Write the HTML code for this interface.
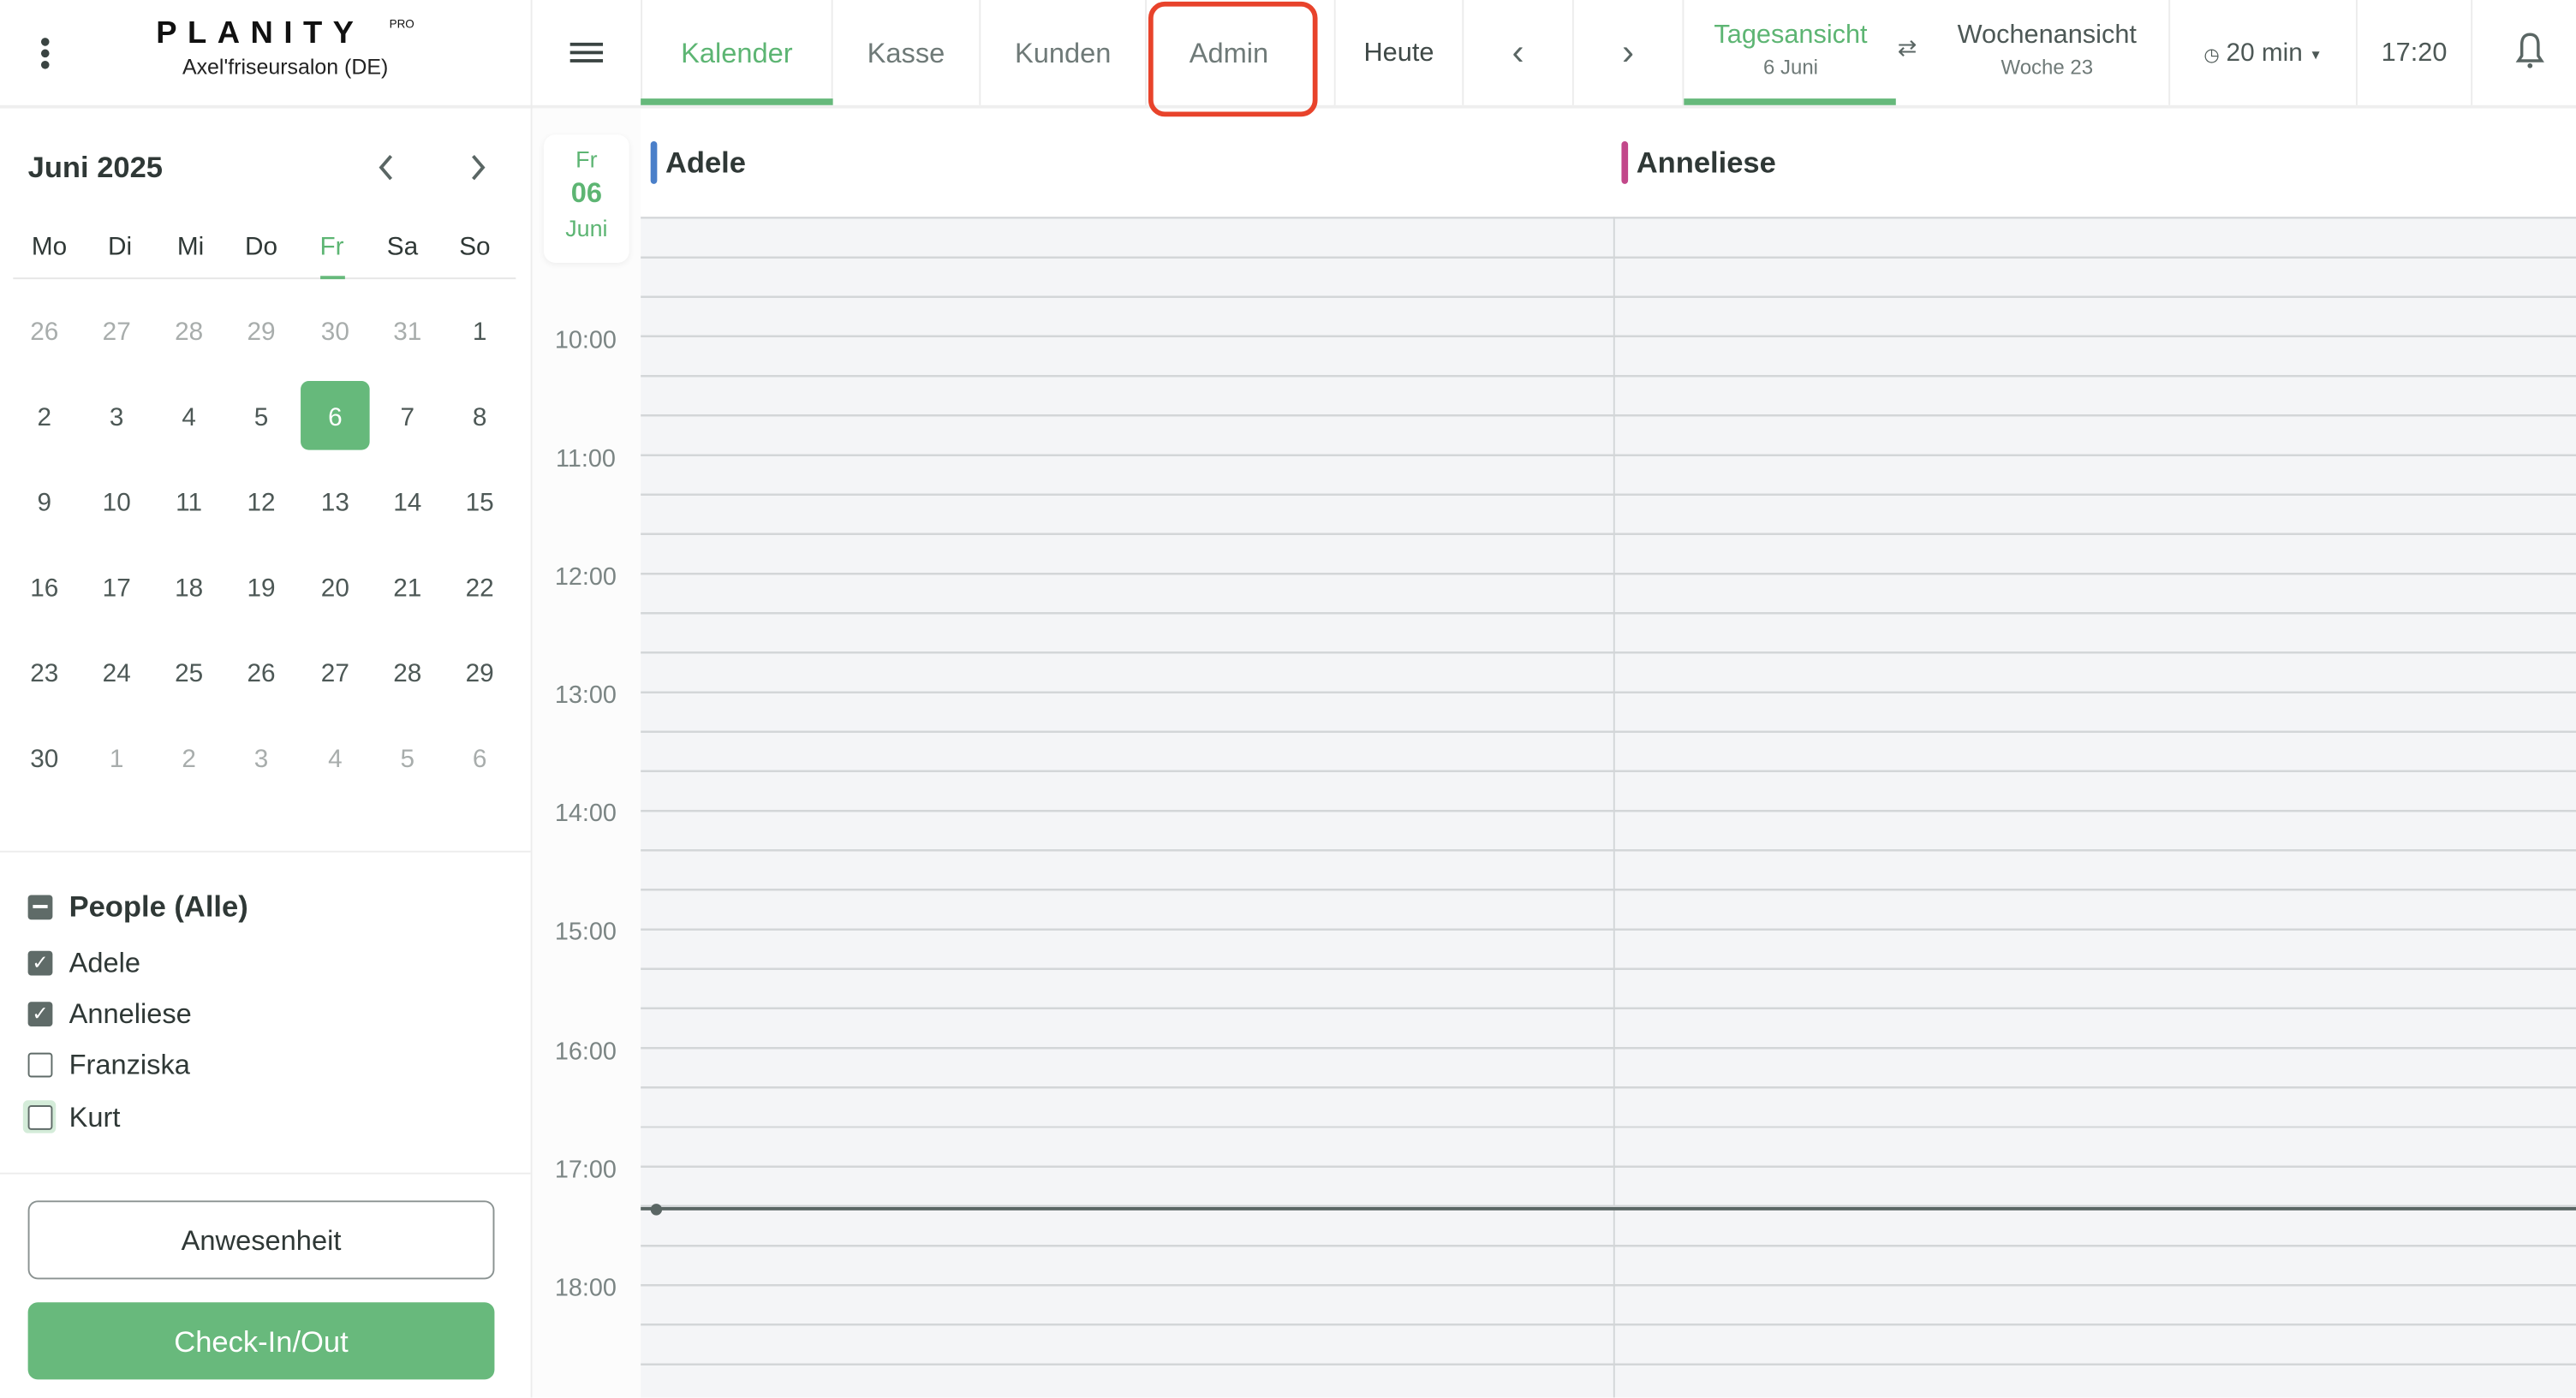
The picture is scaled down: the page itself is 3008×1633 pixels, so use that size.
<!DOCTYPE html>
<html><head><meta charset="utf-8">
<style>
html,body{margin:0;padding:0;width:3008px;height:1632px;overflow:hidden;background:#fff}
#s{position:absolute;left:0;top:0;width:1568px;height:851px;transform:scale(1.918367);transform-origin:0 0;font-family:"Liberation Sans",sans-serif;color:#374140;overflow:hidden}
.a{position:absolute}
.tab{position:absolute;top:0;height:64px;display:flex;align-items:center;justify-content:center;font-size:17px;color:#6f7a78;border-right:1px solid #ececec;box-sizing:border-box}
.c{position:absolute;width:30px;text-align:center;font-size:15.5px;color:#4d5856;margin-left:-15px}
.g{color:#a8adac}
.t{position:absolute;left:323px;width:67px;text-align:center;font-size:15px;color:#7b8584}
.cb{position:absolute;left:17px;width:15px;height:15px;border-radius:2px;box-sizing:border-box}
.pl{position:absolute;left:42px;font-size:17px;color:#2f3836}
</style></head><body><div id="s">
<!-- header -->
<div class="a" style="left:0;top:64px;width:1568px;height:2px;background:#efefef"></div>
<div class="a" style="left:25px;top:23px;width:5px;height:5px;border-radius:3px;background:#3a4442"></div>
<div class="a" style="left:25px;top:30px;width:5px;height:5px;border-radius:3px;background:#3a4442"></div>
<div class="a" style="left:25px;top:37px;width:5px;height:5px;border-radius:3px;background:#3a4442"></div>
<div class="a" style="left:95px;top:10px;font-size:19px;font-weight:bold;letter-spacing:6.5px;color:#111">PLANITY</div>
<div class="a" style="left:237px;top:12px;font-size:7px;color:#111">PRO</div>
<div class="a" style="left:111px;top:33px;font-size:13px;color:#222">Axel'friseursalon (DE)</div>
<div class="a" style="left:323px;top:0;width:1px;height:851px;background:#ececec"></div>
<div class="a" style="left:347px;top:26px;width:20px;height:2px;background:#3a4442;box-shadow:0 5px 0 #3a4442,0 10px 0 #3a4442"></div>
<div class="tab" style="left:390px;width:117px;color:#5db573;border-left:1px solid #ececec;padding-top:2px">Kalender</div>
<div class="a" style="left:390px;top:60px;width:117px;height:4px;background:#66b97b"></div>
<div class="tab" style="left:507px;width:90px;padding-top:2px">Kasse</div>
<div class="tab" style="left:597px;width:101px;padding-top:2px">Kunden</div>
<div class="tab" style="left:698px;width:115px;padding-top:2px;padding-right:14px">Admin</div>
<div class="a" style="left:699px;top:1px;width:97px;height:64px;border:3px solid #e8432b;border-radius:10px"></div>
<div class="tab" style="left:813px;width:78px;font-size:16px;color:#3f4947;padding-top:2px">Heute</div>
<div class="tab" style="left:891px;width:67px;font-size:22px;color:#5a6664">&#x2039;</div>
<div class="tab" style="left:958px;width:67px;font-size:22px;color:#5a6664">&#x203A;</div>
<div class="a" style="left:1025px;top:0;width:130px;height:64px;text-align:center">
 <div style="margin-top:13px;font-size:16px;color:#5db573">Tagesansicht</div>
 <div style="font-size:12.5px;color:#6f7a78;margin-top:3px">6 Juni</div></div>
<div class="a" style="left:1025px;top:60px;width:129px;height:4px;background:#66b97b"></div>
<div class="a" style="left:1155px;top:21px;font-size:14px;color:#5a6664">&#x21C4;</div>
<div class="a" style="left:1176px;top:0;width:140px;height:64px;text-align:center">
 <div style="margin-top:13px;font-size:16px;color:#4d5856">Wochenansicht</div>
 <div style="font-size:12.5px;color:#6f7a78;margin-top:3px">Woche 23</div></div>
<div class="tab" style="left:1320px;width:115px;font-size:15.5px;color:#4d5856;border-left:1px solid #ececec;padding-top:2px"><span style="font-size:11px;margin-right:4px">&#x25F7;</span>20 min <span style="font-size:8px;margin-left:4px">&#x25BC;</span></div>
<div class="tab" style="left:1435px;width:70px;font-size:16px;color:#4d5856;padding-top:2px">17:20</div>
<svg class="a" style="left:1530px;top:19px" width="20" height="24" viewBox="0 0 20 24"><path d="M10 2 C6 2 5 5 5 8 L5 15 L3 18 L17 18 L15 15 L15 8 C15 5 14 2 10 2Z" fill="none" stroke="#5a6664" stroke-width="1.8"/><circle cx="10" cy="21" r="1.5" fill="#5a6664"/></svg>
<!-- sidebar calendar -->
<div class="a" style="left:17px;top:92px;font-size:18px;font-weight:bold;color:#2f3836">Juni 2025</div>
<svg class="a" style="left:229px;top:93px" width="12" height="18" viewBox="0 0 12 18"><path d="M9 2 L3 9 L9 16" fill="none" stroke="#5a6664" stroke-width="2"/></svg>
<svg class="a" style="left:285px;top:93px" width="12" height="18" viewBox="0 0 12 18"><path d="M3 2 L9 9 L3 16" fill="none" stroke="#5a6664" stroke-width="2"/></svg>
<div class="c" style="left:30px;top:142px;color:#2f3836">Mo</div>
<div class="c" style="left:73px;top:142px;color:#2f3836">Di</div>
<div class="c" style="left:116px;top:142px;color:#2f3836">Mi</div>
<div class="c" style="left:159px;top:142px;color:#2f3836">Do</div>
<div class="c" style="left:202px;top:142px;color:#5db573">Fr</div>
<div class="c" style="left:245px;top:142px;color:#2f3836">Sa</div>
<div class="c" style="left:289px;top:142px;color:#2f3836">So</div>
<div class="a" style="left:8px;top:169px;width:306px;height:1px;background:#e6e6e6"></div>
<div class="a" style="left:195px;top:168px;width:15px;height:2px;background:#66b97b"></div>
<div class="a" style="left:183px;top:232px;width:42px;height:42px;border-radius:5px;background:#66b97b"></div>
<div class="c g" style="left:27px;top:194px">26</div><div class="c g" style="left:71px;top:194px">27</div><div class="c g" style="left:115px;top:194px">28</div><div class="c g" style="left:159px;top:194px">29</div><div class="c g" style="left:204px;top:194px">30</div><div class="c g" style="left:248px;top:194px">31</div><div class="c" style="left:292px;top:194px">1</div>
<div class="c" style="left:27px;top:246px">2</div><div class="c" style="left:71px;top:246px">3</div><div class="c" style="left:115px;top:246px">4</div><div class="c" style="left:159px;top:246px">5</div><div class="c" style="left:204px;top:246px;color:#fff">6</div><div class="c" style="left:248px;top:246px">7</div><div class="c" style="left:292px;top:246px">8</div>
<div class="c" style="left:27px;top:298px">9</div><div class="c" style="left:71px;top:298px">10</div><div class="c" style="left:115px;top:298px">11</div><div class="c" style="left:159px;top:298px">12</div><div class="c" style="left:204px;top:298px">13</div><div class="c" style="left:248px;top:298px">14</div><div class="c" style="left:292px;top:298px">15</div>
<div class="c" style="left:27px;top:350px">16</div><div class="c" style="left:71px;top:350px">17</div><div class="c" style="left:115px;top:350px">18</div><div class="c" style="left:159px;top:350px">19</div><div class="c" style="left:204px;top:350px">20</div><div class="c" style="left:248px;top:350px">21</div><div class="c" style="left:292px;top:350px">22</div>
<div class="c" style="left:27px;top:402px">23</div><div class="c" style="left:71px;top:402px">24</div><div class="c" style="left:115px;top:402px">25</div><div class="c" style="left:159px;top:402px">26</div><div class="c" style="left:204px;top:402px">27</div><div class="c" style="left:248px;top:402px">28</div><div class="c" style="left:292px;top:402px">29</div>
<div class="c" style="left:27px;top:454px">30</div><div class="c g" style="left:71px;top:454px">1</div><div class="c g" style="left:115px;top:454px">2</div><div class="c g" style="left:159px;top:454px">3</div><div class="c g" style="left:204px;top:454px">4</div><div class="c g" style="left:248px;top:454px">5</div><div class="c g" style="left:292px;top:454px">6</div>
<div class="a" style="left:0;top:518px;width:323px;height:1px;background:#ececec"></div>
<!-- people -->
<div class="cb" style="top:545px;background:#5f6b68"><div style="margin:6px 3px;height:2px;background:#fff"></div></div>
<div class="a" style="left:42px;top:542px;font-size:18px;font-weight:bold;color:#2f3836">People (Alle)</div>
<div class="cb" style="top:579px;background:#5f6b68;color:#fff;font-size:12px;text-align:center;line-height:15px">&#x2713;</div>
<div class="pl" style="top:577px">Adele</div>
<div class="cb" style="top:610px;background:#5f6b68;color:#fff;font-size:12px;text-align:center;line-height:15px">&#x2713;</div>
<div class="pl" style="top:608px">Anneliese</div>
<div class="cb" style="top:641px;border:1.5px solid #5f6b68"></div>
<div class="pl" style="top:639px">Franziska</div>
<div class="a" style="left:14px;top:670px;width:20px;height:20px;border-radius:3px;background:#d4ecd9"></div>
<div class="cb" style="top:673px;border:1.5px solid #5f6b68;background:#fff"></div>
<div class="pl" style="top:671px">Kurt</div>
<div class="a" style="left:0;top:714px;width:323px;height:1px;background:#ececec"></div>
<div class="a" style="left:17px;top:731px;width:284px;height:48px;box-sizing:border-box;border:1px solid #8a9291;border-radius:6px;text-align:center;line-height:48px;font-size:17px;color:#2f3836">Anwesenheit</div>
<div class="a" style="left:17px;top:793px;width:284px;height:47px;border-radius:6px;background:#68b97c;text-align:center;line-height:48px;font-size:18px;color:#fff">Check-In/Out</div>
<!-- time column -->
<div class="a" style="left:324px;top:66px;width:66px;height:785px;background:#fcfcfc"></div>
<div class="a" style="left:331px;top:82px;width:52px;height:78px;background:#fff;border-radius:7px;box-shadow:0 1px 4px rgba(0,0,0,.06);text-align:center;color:#5db573">
 <div style="font-size:14px;margin-top:7px">Fr</div>
 <div style="font-size:17px;font-weight:bold;margin-top:3px">06</div>
 <div style="font-size:14px;margin-top:3px">Juni</div></div>
<div class="t" style="top:199px">10:00</div><div class="t" style="top:271px">11:00</div><div class="t" style="top:343px">12:00</div><div class="t" style="top:415px">13:00</div><div class="t" style="top:487px">14:00</div><div class="t" style="top:559px">15:00</div><div class="t" style="top:632px">16:00</div><div class="t" style="top:704px">17:00</div><div class="t" style="top:776px">18:00</div>
<!-- staff header -->
<div class="a" style="left:396px;top:86px;width:4px;height:26px;border-radius:2px;background:#4a7fc9"></div>
<div class="a" style="left:405px;top:89px;font-size:18px;font-weight:bold;color:#2f3836">Adele</div>
<div class="a" style="left:987px;top:86px;width:4px;height:26px;border-radius:2px;background:#c2478a"></div>
<div class="a" style="left:996px;top:89px;font-size:18px;font-weight:bold;color:#2f3836">Anneliese</div>
<!-- grid -->
<div class="a" style="left:390px;top:132px;width:1178px;height:719px;background:#f4f5f7 repeating-linear-gradient(to bottom,#d3d6d8 0,#d3d6d8 1.3px,transparent 1.3px,transparent 24.07px)"></div>
<div class="a" style="left:982px;top:132px;width:1px;height:719px;background:#d3d6d8"></div>
<div class="a" style="left:390px;top:735px;width:1178px;height:2px;background:#5a6664"></div>
<div class="a" style="left:396px;top:733px;width:7px;height:7px;border-radius:4px;background:#5a6664"></div>
</div></body></html>
